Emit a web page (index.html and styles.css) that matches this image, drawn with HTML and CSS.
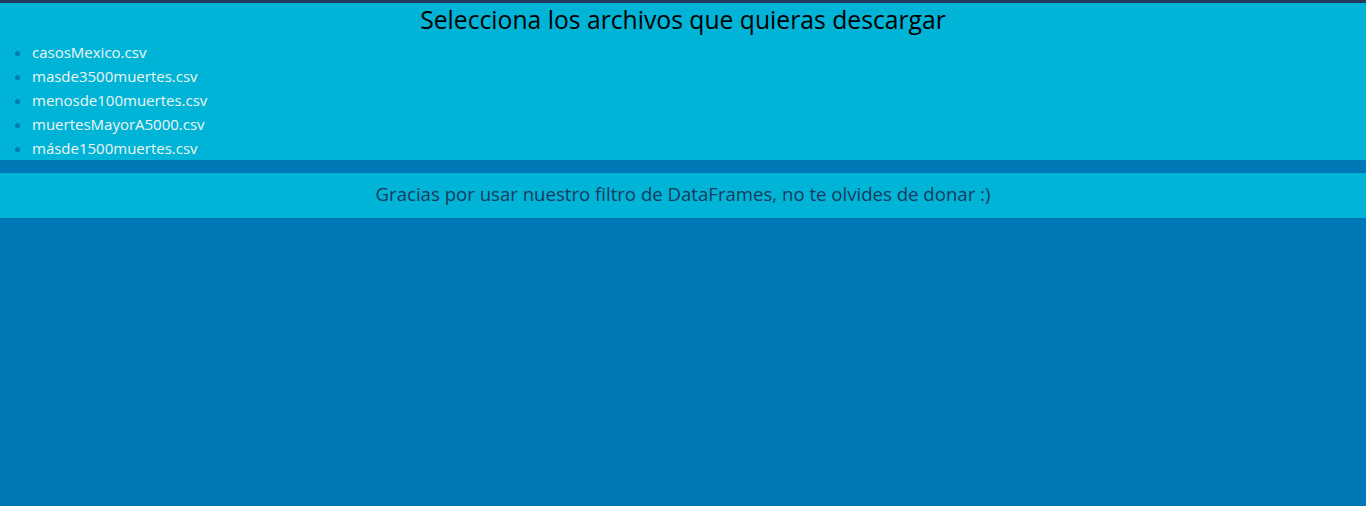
FILE: index.html
```html
<!DOCTYPE html>
<html lang="es">
<head>
<meta charset="utf-8">
<title>Descargas</title>
<link rel="stylesheet" href="styles.css">
</head>
<body>
<div class="topbar"></div>
<section class="files">
  <h1 class="title">Selecciona los archivos que quieras descargar</h1>
  <ul class="file-list">
    <li><span class="file-name">casosMexico.csv</span></li>
    <li><span class="file-name">masde3500muertes.csv</span></li>
    <li><span class="file-name">menosde100muertes.csv</span></li>
    <li><span class="file-name">muertesMayorA5000.csv</span></li>
    <li><span class="file-name">másde1500muertes.csv</span></li>
  </ul>
</section>
<footer class="thanks">Gracias por usar nuestro filtro de DataFrames, no te olvides de donar :)</footer>
</body>
</html>
```
FILE: styles.css
```css
html, body {
  margin: 0;
  padding: 0;
}
body {
  background: #0077b6;
  font-family: "Open Sans", "Noto Sans", sans-serif;
  min-height: 506px;
}
.topbar {
  height: 3px;
  background: #22375e;
}
.files {
  background: #00b4d8;
}
.title {
  margin: 0 0 3px;
  text-align: center;
  font-size: 24.7px;
  font-weight: 400;
  line-height: 34px;
  color: #000;
}
.file-list {
  margin: 0;
  padding: 0 0 0 32px;
  color: #0077b6;
}
.file-list li {
  font-size: 15px;
  line-height: 24px;
}
.file-list li::marker {
  font-size: 15px;
}
.file-name {
  color: #eef4f2;
}
.thanks {
  margin-top: 13px;
  background: #00b4d8;
  height: 41px;
  padding-bottom: 4px;
  line-height: 41px;
  text-align: center;
  font-size: 18.6px;
  color: #1b3a5c;
}
```
